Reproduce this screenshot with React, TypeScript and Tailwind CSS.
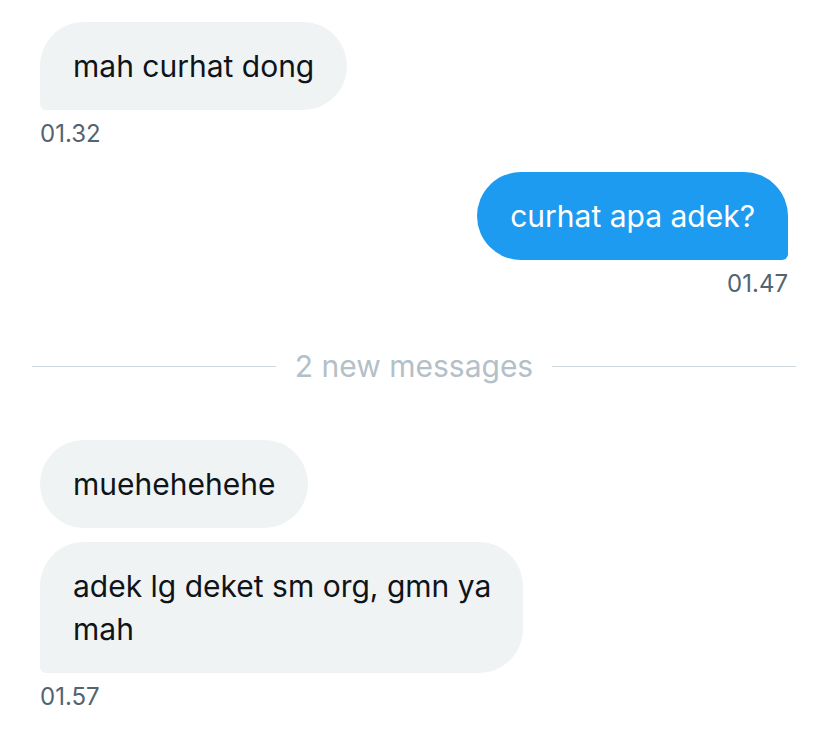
import React from "react"

type Msg = { children: React.ReactNode; mine?: boolean; tail?: boolean; className?: string }

function Bubble({ children, mine, tail, className = "" }: Msg) {
  const shape = mine
    ? "rounded-[44px] rounded-br-[6px] bg-[#1d9bf0] text-white"
    : tail
      ? "rounded-[44px] rounded-bl-[6px] bg-[#eff3f4] text-[#0f1419]"
      : "rounded-[44px] bg-[#eff3f4] text-[#0f1419]"
  return (
    <div className={`px-[33px] pt-[23px] pb-[22px] text-[30px] leading-[43px] ${shape} ${className}`}>
      {children}
    </div>
  )
}

function Time({ value, right }: { value: string; right?: boolean }) {
  return (
    <div className={`mt-[10px] text-[24px] leading-[28px] text-[#536471] ${right ? "self-end" : ""}`}>
      {value}
    </div>
  )
}

export default function App() {
  return (
    <div className="w-[828px] h-[731px] bg-white overflow-hidden" style={{ fontFamily: "Inter, 'Noto Sans', sans-serif" }}>
      <div className="flex flex-col items-start px-[40px] pt-[22px]">
        <Bubble tail>mah curhat dong</Bubble>
        <Time value="01.32" />

        <div className="mt-[24px] self-end flex flex-col items-end">
          <Bubble mine>curhat apa adek?</Bubble>
          <Time value="01.47" right />
        </div>
      </div>

      <div className="flex items-center gap-[19px] px-[32px] mt-[50px]">
        <div className="flex-1 h-px bg-[#cfd9de]" />
        <span className="text-[30px] leading-[36px] text-[#b4c0c8]">2 new messages</span>
        <div className="flex-1 h-px bg-[#cfd9de]" />
      </div>

      <div className="flex flex-col items-start gap-[14px] px-[40px] mt-[56px]">
        <Bubble>muehehehehe</Bubble>
        <Bubble tail className="w-[483px] pr-[20px] whitespace-nowrap">
          adek lg deket sm org, gmn ya
          <br />
          mah
        </Bubble>
      </div>
      <div className="px-[40px]">
        <Time value="01.57" />
      </div>
    </div>
  )
}
